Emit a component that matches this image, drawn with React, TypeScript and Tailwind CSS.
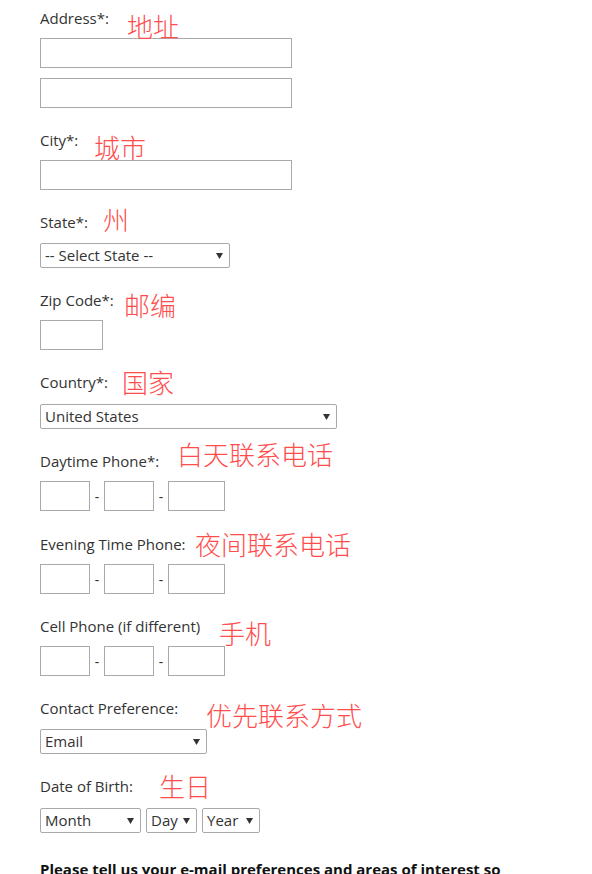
import React from "react";

const latin = { fontFamily: '"Open Sans", "Noto Sans", sans-serif' };
const cjk = { fontFamily: '"Noto Sans CJK SC", "Noto Sans", sans-serif' };

function Note({ text, left, top }: { text: string; left: string; top: string }) {
  return (
    <span
      className={`absolute whitespace-nowrap text-[26px] leading-none font-light text-[#ff4d4d] ${left} ${top}`}
      style={cjk}
    >
      {text}
    </span>
  );
}

function Label({ children, note }: { children: React.ReactNode; note: React.ReactNode }) {
  return (
    <div className="relative h-5 text-[15px] leading-5 text-[#333]">
      {children}
      {note}
    </div>
  );
}

function Input({ w }: { w: string }) {
  return <div className={`h-[30px] border border-[#a9a9a9] bg-white ${w}`} />;
}

function Caret() {
  return (
    <svg width="7" height="6" viewBox="0 0 7 6" className="shrink-0">
      <path d="M0 0 L7 0 L3.5 6 Z" fill="#333" />
    </svg>
  );
}

function Select({ w, value }: { w: string; value: string }) {
  return (
    <div
      className={`flex h-[25px] items-center justify-between rounded-[2px] border border-[#a9a9a9] bg-white pl-1 pr-[6px] text-[15px] text-[#333] ${w}`}
    >
      <span className="leading-none">{value}</span>
      <Caret />
    </div>
  );
}

function Phone() {
  return (
    <div className="mt-[10px] flex items-center">
      <Input w="w-[50px]" />
      <span className="w-[14px] text-center text-[14px] text-[#333]">-</span>
      <Input w="w-[50px]" />
      <span className="w-[14px] text-center text-[14px] text-[#333]">-</span>
      <Input w="w-[57px]" />
    </div>
  );
}

export default function App() {
  return (
    <div className="h-[874px] w-[592px] overflow-hidden bg-white pl-10 pt-2" style={latin}>
      <Label note={<Note text="地址" left="left-[87px]" top="top-[5px]" />}>Address*:</Label>
      <div className="mt-[10px]">
        <Input w="w-[252px]" />
      </div>
      <div className="mt-[10px]">
        <Input w="w-[252px]" />
      </div>

      <div className="mt-[22px]">
        <Label note={<Note text="城市" left="left-[54px]" top="top-[4px]" />}>City*:</Label>
        <div className="mt-[10px]">
          <Input w="w-[252px]" />
        </div>
      </div>

      <div className="mt-[22px]">
        <Label note={<Note text="州" left="left-[63px]" top="top-[-6px]" />}>State*:</Label>
        <div className="mt-[11px]">
          <Select w="w-[190px]" value="-- Select State --" />
        </div>
      </div>

      <div className="mt-[22px]">
        <Label note={<Note text="邮编" left="left-[84px]" top="top-[2px]" />}>Zip Code*:</Label>
        <div className="mt-[10px]">
          <Input w="w-[63px]" />
        </div>
      </div>

      <div className="mt-[22px]">
        <Label note={<Note text="国家" left="left-[82px]" top="top-[-3px]" />}>Country*:</Label>
        <div className="mt-[12px]">
          <Select w="w-[297px]" value="United States" />
        </div>
      </div>

      <div className="mt-[22px]">
        <Label note={<Note text="白天联系电话" left="left-[137px]" top="top-[-10px]" />}>Daytime Phone*:</Label>
        <Phone />
      </div>

      <div className="mt-[23px]">
        <Label note={<Note text="夜间联系电话" left="left-[155px]" top="top-[-3px]" />}>Evening Time Phone:</Label>
        <Phone />
      </div>

      <div className="mt-[22px]">
        <Label note={<Note text="手机" left="left-[179px]" top="top-[4px]" />}>Cell Phone (if different)</Label>
        <Phone />
      </div>

      <div className="mt-[22px]">
        <Label note={<Note text="优先联系方式" left="left-[166px]" top="top-[4px]" />}>Contact Preference:</Label>
        <div className="mt-[11px]">
          <Select w="w-[167px]" value="Email" />
        </div>
      </div>

      <div className="mt-[22px]">
        <Label note={<Note text="生日" left="left-[119px]" top="top-[-3px]" />}>Date of Birth:</Label>
        <div className="mt-[12px] flex gap-[5px]">
          <Select w="w-[101px]" value="Month" />
          <Select w="w-[51px]" value="Day" />
          <Select w="w-[58px]" value="Year" />
        </div>
      </div>

      <p className="mt-[26px] whitespace-nowrap text-[15px] font-bold leading-5 text-[#111]">
        Please tell us your e-mail preferences and areas of interest so
      </p>
    </div>
  );
}
